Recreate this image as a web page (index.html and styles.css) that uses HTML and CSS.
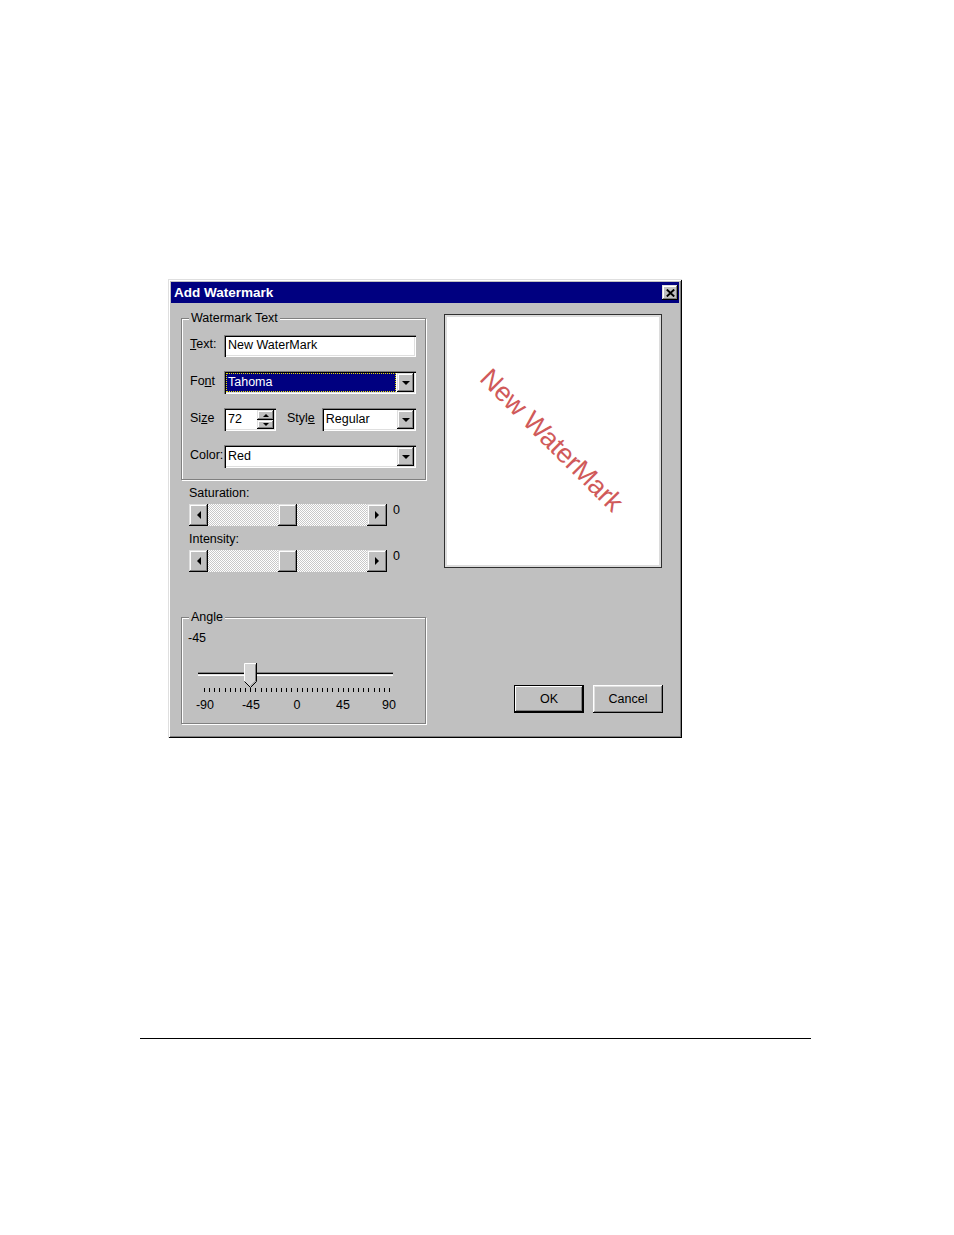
FILE: index.html
```html
<!DOCTYPE html>
<html>
<head>
<meta charset="utf-8">
<title>Add Watermark</title>
<link rel="stylesheet" href="styles.css">
</head>
<body>
<div class="page">
  <div class="dialog">
    <div class="titlebar">
      <span class="title">Add Watermark</span>
      <span class="close raised">
        <svg width="9" height="8" viewBox="0 0 9 8"><path d="M0.8 0.5L8.2 7.5M8.2 0.5L0.8 7.5" stroke="#000" stroke-width="1.9" fill="none"/></svg>
      </span>
    </div>
    <div class="content">
      <div class="left">
        <div class="group group-text">
          <span class="legend">Watermark Text</span>
          <div class="form">
            <span class="lbl"><u>T</u>ext:</span>
            <div class="field text-field"><span class="val">New WaterMark</span></div>

            <span class="lbl">Fo<u>n</u>t</span>
            <div class="field combo">
              <span class="val sel">Tahoma</span>
              <span class="dd raised"><i class="tri-down"></i></span>
            </div>

            <span class="lbl">Si<u>z</u>e</span>
            <div class="size-row">
              <div class="field size">
                <span class="val">72</span>
                <span class="spin">
                  <span class="sbtn raised"><i class="tri-up-s"></i></span>
                  <span class="sbtn raised"><i class="tri-down-s"></i></span>
                </span>
              </div>
              <span class="lbl style-lbl">Styl<u>e</u></span>
              <div class="field combo style">
                <span class="val">Regular</span>
                <span class="dd raised"><i class="tri-down"></i></span>
              </div>
            </div>

            <span class="lbl">Color:</span>
            <div class="field combo">
              <span class="val">Red</span>
              <span class="dd raised"><i class="tri-down"></i></span>
            </div>
          </div>
        </div>

        <div class="caption">Saturation:</div>
        <div class="slider-row">
          <div class="scroll">
            <span class="arrow-btn raised"><i class="tri-left"></i></span>
            <span class="track"><span class="pre"></span><span class="thumb raised"></span></span>
            <span class="arrow-btn right raised"><i class="tri-right"></i></span>
          </div>
          <span class="zero">0</span>
        </div>

        <div class="caption">Intensity:</div>
        <div class="slider-row">
          <div class="scroll">
            <span class="arrow-btn raised"><i class="tri-left"></i></span>
            <span class="track"><span class="pre"></span><span class="thumb raised"></span></span>
            <span class="arrow-btn right raised"><i class="tri-right"></i></span>
          </div>
          <span class="zero">0</span>
        </div>

        <div class="group group-angle">
          <span class="legend">Angle</span>
          <div class="angle-val">-45</div>
          <div class="trackbar">
            <div class="channel"></div>
            <svg class="tb-thumb" width="13" height="25" viewBox="0 0 13 25">
              <path d="M0.5 0.5H12.5V18.5L6.5 24.5L0.5 18.5Z" fill="#d4d4d4"/>
              <path d="M0.5 18.5V0.5H12" fill="none" stroke="#fff"/>
              <path d="M12.5 0V18.5L6.5 24.5L0.5 18.5" fill="none" stroke="#000"/>
              <path d="M11.5 1.5V18L6.5 23" fill="none" stroke="#808080"/>
            </svg>
          </div>
          <div class="ticks"></div>
          <div class="tick-labels">
            <span>-90</span><span>-45</span><span>0</span><span>45</span><span>90</span>
          </div>
        </div>
      </div>

      <div class="right">
        <div class="preview">
          <span class="wm">New WaterMark</span>
        </div>
        <div class="buttons">
          <span class="btn default">OK</span>
          <span class="btn">Cancel</span>
        </div>
      </div>
    </div>
  </div>
  <div class="rule"></div>
</div>
</body>
</html>
```
FILE: styles.css
```css
* { box-sizing: border-box; }
html, body { margin: 0; padding: 0; background: #fff; }
body {
  font-family: "Liberation Sans", Arial, sans-serif;
  font-size: 12.5px;
  color: #000;
}
.page { padding-top: 279px; width: 954px; height: 1235px; overflow: hidden; }

.raised {
  background: #c0c0c0;
  box-shadow: inset -1px -1px 0 #000, inset 1px 1px 0 #dfdfdf,
              inset -2px -2px 0 #808080, inset 2px 2px 0 #fff;
}

.dialog {
  margin-left: 168px;
  width: 514px;
  height: 459px;
  background: #c0c0c0;
  padding: 3px;
  box-shadow: inset 1px 1px 0 #dfdfdf, inset -1px -1px 0 #000,
              inset 2px 2px 0 #fff, inset -2px -2px 0 #808080;
}
.titlebar {
  height: 21px;
  background: #000080;
  display: flex;
  align-items: center;
  justify-content: space-between;
  padding: 0 1px 0 3px;
}
.title { color: #fff; font-weight: bold; font-size: 13.5px; line-height: 21px; }
.close {
  width: 16px; height: 15px;
  display: flex; align-items: center; justify-content: center;
}

.content { display: flex; gap: 18px; padding: 11px 0 0 10px; }
.left { width: 245px; padding-top: 4px; }
.right { width: 219px; }

.group {
  border: 1px solid #808080;
  box-shadow: inset 1px 1px 0 #fff, 1px 1px 0 #fff;
}
.legend {
  display: block;
  width: max-content;
  margin: -8px 0 0 7px;
  padding: 0 2px;
  background: #c0c0c0;
  line-height: 14px;
}
.group-text { padding-bottom: 11px; }
.form {
  display: grid;
  grid-template-columns: 34px 192px;
  grid-auto-rows: 23px;
  row-gap: 14px;
  margin: 9px 0 0 8px;
  align-items: center;
}
.lbl { line-height: 14px; padding-bottom: 3px; }

.field {
  height: 23px;
  background: #fff;
  box-shadow: inset 1px 1px 0 #808080, inset 2px 2px 0 #000,
              inset -1px -1px 0 #fff, inset -2px -2px 0 #dfdfdf;
  display: flex;
  align-items: center;
  padding: 2px;
}
.val { flex: 1; padding-left: 2px; line-height: 19px; white-space: nowrap; }
.text-field { height: 22px; }
.sel {
  background: #000080;
  color: #fff;
  outline: 1px dotted #e8e000;
  outline-offset: -1px;
  margin-right: 1px;
  height: 19px;
}
.dd {
  width: 17px; height: 19px;
  display: flex; align-items: center; justify-content: center;
}
.tri-down {
  width: 0; height: 0;
  border-left: 4px solid transparent;
  border-right: 4px solid transparent;
  border-top: 4px solid #000;
}
.tri-up-s, .tri-down-s {
  width: 0; height: 0;
  border-left: 3px solid transparent;
  border-right: 3px solid transparent;
}
.tri-up-s { border-bottom: 3px solid #000; }
.tri-down-s { border-top: 3px solid #000; }
.tri-left, .tri-right {
  width: 0; height: 0;
  border-top: 4px solid transparent;
  border-bottom: 4px solid transparent;
}
.tri-left { border-right: 4px solid #000; }
.tri-right { border-left: 4px solid #000; }

.size-row { display: flex; align-items: center; height: 23px; }
.size-row .lbl { padding-bottom: 0; }
.size { width: 52px; flex: none; }
.spin { width: 17px; height: 19px; display: flex; flex-direction: column; }
.sbtn { height: 10px; display: flex; align-items: center; justify-content: center; }
.sbtn + .sbtn { height: 9px; }
.style-lbl { margin: 0 7px 3px 11px; }
.style { flex: 1; }

.caption { margin: 6px 0 0 8px; line-height: 14px; }
.slider-row { display: flex; align-items: flex-start; margin: 4px 0 0 8px; }
.scroll { width: 198px; height: 22px; display: flex; }
.arrow-btn { width: 19px; height: 22px; display: flex; align-items: center; justify-content: center; flex: none; }
.arrow-btn.right { width: 20px; }
.track {
  flex: 1;
  display: flex;
  background: conic-gradient(#fff 0 25%, #c8c8c8 0 50%, #fff 0 75%, #c8c8c8 0) 0 0 / 2px 2px;
}
.pre { width: 70px; }
.thumb { width: 19px; height: 22px; }
.zero { margin: -1px 0 0 6px; line-height: 14px; }

.group-angle { margin-top: 45px; padding-bottom: 11px; }
.angle-val { margin: 7px 0 0 6px; line-height: 14px; }
.trackbar {
  position: relative;
  margin: 16px 0 0 16px;
  width: 196px;
  height: 27px;
  padding-top: 11px;
}
.channel {
  width: 195px;
  height: 4px;
  background: linear-gradient(#808080 0 1px, #000 1px 2px, #dfdfdf 2px 3px, #fff 3px 4px);
}
.tb-thumb { position: absolute; left: 46px; top: 2px; display: block; }
.ticks {
  margin-left: 22px;
  width: 186px;
  height: 4px;
  background: repeating-linear-gradient(to right, #000 0 1px, transparent 1px 5.139px);
}
.tick-labels {
  display: grid;
  grid-template-columns: repeat(5, 46px);
  margin-top: 6px;
  line-height: 14px;
  text-align: center;
}

.preview {
  width: 218px;
  height: 254px;
  background: #fff;
  border: 1px solid #303030;
  box-shadow: inset 0 0 0 2px #dcdcdc;
  display: flex;
  align-items: center;
  justify-content: center;
  overflow: hidden;
}
.wm {
  font-size: 27px;
  color: #d05a5a;
  white-space: nowrap;
  letter-spacing: -0.3px;
  transform: translate(-2px, -1px) rotate(45deg);
}
.buttons { display: flex; justify-content: flex-end; gap: 9px; margin-top: 117px; }
.btn {
  width: 70px; height: 28px;
  display: flex; align-items: center; justify-content: center;
  background: #c0c0c0;
  box-shadow: inset -1px -1px 0 #000, inset 1px 1px 0 #fff,
              inset -2px -2px 0 #808080, inset 2px 2px 0 #dfdfdf;
}
.btn.default {
  box-shadow: inset 0 0 0 1px #000, inset -2px -2px 0 #000,
              inset 2px 2px 0 #fff, inset -3px -3px 0 #808080;
}

.rule { margin: 300px 0 0 140px; width: 671px; height: 1px; background: #000; }
```
